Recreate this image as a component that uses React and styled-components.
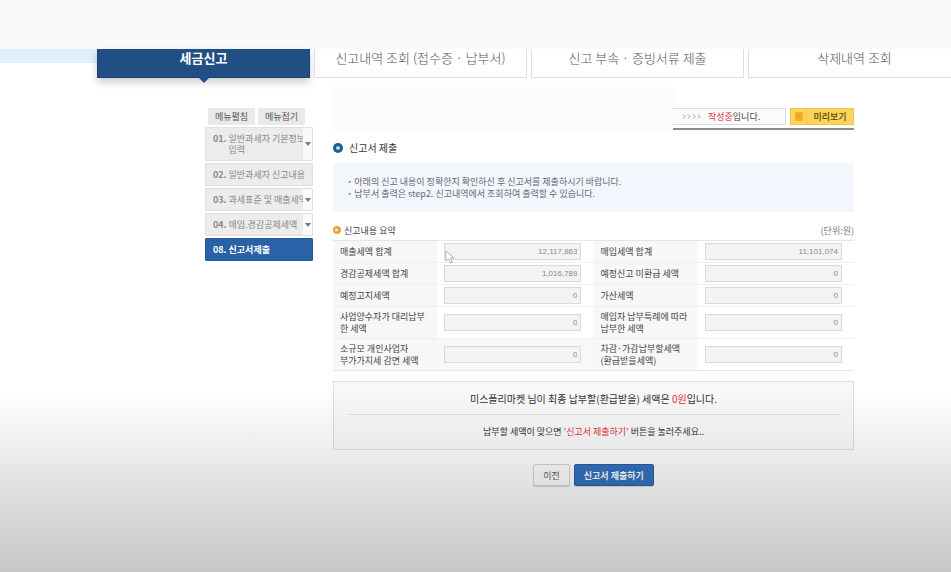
import React from "react";
import styled, { createGlobalStyle } from "styled-components";

const tabs = [
  { name: "세금신고", active: true },
  { name: "신고내역 조회 (접수증 · 납부서)" },
  { name: "신고 부속 · 증빙서류 제출" },
  { name: "삭제내역 조회" },
];

const steps = [
  { no: "01.", lines: ["일반과세자 기본정보", "입력"], more: true },
  { no: "02.", lines: ["일반과세자 신고내용"] },
  { no: "03.", lines: ["과세표준 및 매출세액"], more: true },
  { no: "04.", lines: ["매입.경감공제세액"], more: true },
  { no: "08.", lines: ["신고서제출"], active: true },
];

const rows = [
  [
    { id: "sales", label: ["매출세액 합계"], value: "12,117,863" },
    { id: "purchase", label: ["매입세액 합계"], value: "11,101,074" },
  ],
  [
    { id: "deduct", label: ["경감공제세액 합계"], value: "1,016,789" },
    { id: "unpaid", label: ["예정신고 미환급 세액"], value: "0" },
  ],
  [
    { id: "notice", label: ["예정고지세액"], value: "0" },
    { id: "penalty", label: ["가산세액"], value: "0" },
  ],
  [
    { id: "transfer", label: ["사업양수자가 대리납부", "한 세액"], value: "0" },
    { id: "buyer", label: ["매입자 납부특례에 따라", "납부한 세액"], value: "0" },
  ],
  [
    { id: "small", label: ["소규모 개인사업자", "부가가치세 감면 세액"], value: "0", muted: true },
    { id: "total", label: ["차감·가감납부할세액", "(환급받을세액)"], value: "0" },
  ],
];

function Field({ item }) {
  return (
    <>
      <HeadCell scope="row">
        <label htmlFor={item.id}>
          {item.label.map((line) => (
            <Line key={line}>{line}</Line>
          ))}
        </label>
      </HeadCell>
      <ValueCell $muted={item.muted}>
        <Amount id={item.id} defaultValue={item.value} readOnly />
        {item.id === "sales" && (
          <Pointer viewBox="0 0 12 16" aria-hidden="true">
            <path
              d="M1 1v11l3-2.500 2 4.500 2-1-2-4.500h4z"
              fill="#fff"
              stroke="#aaa"
              strokeLinejoin="round"
            />
          </Pointer>
        )}
      </ValueCell>
    </>
  );
}

function App() {
  return (
    <Page>
      <GlobalStyle />
      <TopBand />
      <TabBar>
        <TabEdge />
        <Tabs>
          {tabs.map((tab) => (
            <Tab key={tab.name} href="#" $active={tab.active}>
              {tab.name}
            </Tab>
          ))}
        </Tabs>
      </TabBar>

      <Body>
        <Sidebar>
          <MenuButtons>
            <MenuButton>메뉴펼침</MenuButton>
            <MenuButton>메뉴접기</MenuButton>
          </MenuButtons>
          {steps.map((step) => (
            <Step key={step.no} $active={step.active} $more={step.more}>
              <StepNo>{step.no}</StepNo>
              <StepName>
                {step.lines.map((line) => (
                  <span key={line}>{line}</span>
                ))}
              </StepName>
              {step.more && (
                <StepMore>
                  <svg width="6" height="4" viewBox="0 0 6 4">
                    <path d="M0 0h6L3 4z" fill="#777" />
                  </svg>
                </StepMore>
              )}
            </Step>
          ))}
        </Sidebar>

        <Content>
          <TitleRow>
            <TitleBlank />
            <StatusArea>
              <Status>
                <svg width="20" height="5" viewBox="0 0 20 5">
                  <path
                    d="M1 0.500l2 2-2 2M6 0.500l2 2-2 2M11 0.500l2 2-2 2M16 0.500l2 2-2 2"
                    fill="none"
                    stroke="#999"
                  />
                </svg>
                <span>
                  <Red>작성중</Red>입니다.
                </span>
              </Status>
              <Preview>
                <PreviewIcon>
                  <svg width="8" height="9" viewBox="0 0 8 9">
                    <path d="M0 0h8v9H0z" fill="#efb32f" />
                    <path d="M1 2.500h6M1 4.500h6M1 6.500h6" stroke="#dfa227" />
                  </svg>
                </PreviewIcon>
                <PreviewText>미리보기</PreviewText>
              </Preview>
            </StatusArea>
          </TitleRow>

          <Title>
            <svg width="10" height="10" viewBox="0 0 10 10">
              <circle cx="5" cy="5" r="5" fill="#14619a" />
              <circle cx="5" cy="5" r="2" fill="#8fc4e6" />
              <path d="M3.500 5h3" stroke="#fff" />
            </svg>
            신고서 제출
          </Title>

          <Notice>
            <li>아래의 신고 내용이 정확한지 확인하신 후 신고서를 제출하시기 바랍니다.</li>
            <li>납부서 출력은 step2. 신고내역에서 조회하여 출력할 수 있습니다.</li>
          </Notice>

          <SectionHead>
            <SectionTitle>
              <svg width="8" height="10" viewBox="0 0 8 10">
                <circle cx="4" cy="4" r="4" fill="#e9a23b" />
                <path d="M2.500 2l3 2-3 2z" fill="#fff3d6" />
              </svg>
              신고내용 요약
            </SectionTitle>
            <Unit>(단위:원)</Unit>
          </SectionHead>

          <Table>
            <tbody>
              {rows.map(([left, right]) => (
                <Row key={left.id} $tall={left.label.length > 1}>
                  <Field item={left} />
                  <Field item={right} />
                </Row>
              ))}
            </tbody>
          </Table>

          <Summary>
            <Result>
              미스플리마켓 님이 최종 납부할(환급받을) 세액은 <Red>0원</Red>입니다.
            </Result>
            <Guide>
              납부할 세액이 맞으면 <Red>'신고서 제출하기'</Red> 버튼을 눌러주세요..
            </Guide>
          </Summary>

          <Actions>
            <Button>이전</Button>
            <SubmitButton>신고서 제출하기</SubmitButton>
          </Actions>
        </Content>
      </Body>
      <Shade />
    </Page>
  );
}

export default App;

const GlobalStyle = createGlobalStyle`
  * {
    box-sizing: border-box;
  }

  body {
    margin: 0;
    background: #fff;
    color: #555;
    font-family: "Noto Sans CJK KR", sans-serif;
    font-size: 9px;
    line-height: 11px;
  }

  button,
  input {
    font: inherit;
    color: inherit;
    margin: 0;
  }

  svg {
    display: block;
    flex: none;
  }
`;

const Page = styled.div`
  position: relative;
  min-height: 100vh;
  overflow: hidden;
`;

const TopBand = styled.header`
  height: 49px;
  background: #fcf9fa;
`;

const TabBar = styled.div`
  display: flex;
`;

const TabEdge = styled.div`
  flex: none;
  width: 97px;
  height: 14px;
  background: #e1effc;
`;

const Tabs = styled.nav`
  flex: 1;
  display: grid;
  grid-template-columns: repeat(4, minmax(213px, 1fr));
  gap: 4px;
`;

const Tab = styled.a`
  position: relative;
  height: 29px;
  padding-bottom: 10px;
  display: flex;
  align-items: center;
  justify-content: center;
  font-size: 13px;
  line-height: 18px;
  font-weight: ${(props) => (props.$active ? 700 : 300)};
  color: ${(props) => (props.$active ? "#fff" : "#555")};
  background: ${(props) => (props.$active ? "#214e83" : "#fff")};
  border: 1px solid ${(props) => (props.$active ? "#1b4474" : "#dcdfe2")};
  border-top: none;
  box-shadow: ${(props) =>
    props.$active ? "0 4px 8px rgba(0, 0, 0, 0.2)" : "none"};
  text-decoration: none;
  white-space: nowrap;

  &::after {
    content: "";
    display: ${(props) => (props.$active ? "block" : "none")};
    position: absolute;
    top: 100%;
    left: 50%;
    margin-left: -6px;
    border: 6px solid transparent;
    border-top-color: #214e83;
    border-bottom: none;
  }
`;

const Body = styled.div`
  display: flex;
  align-items: flex-start;
  gap: 20px;
  padding: 9px 97px 24px 205px;
`;

const Sidebar = styled.aside`
  flex: none;
  width: 108px;
  padding-top: 21px;
  display: flex;
  flex-direction: column;
  gap: 2px;
`;

const MenuButtons = styled.div`
  display: flex;
  gap: 3px;
  padding: 0 8px 0 3px;
`;

const MenuButton = styled.button`
  flex: 1;
  height: 17px;
  padding: 0;
  border: none;
  border-radius: 1px;
  background: #e9e9e9;
  color: #555;
  white-space: nowrap;
`;

const Step = styled.button`
  position: relative;
  display: flex;
  align-items: flex-start;
  gap: 2px;
  width: 100%;
  padding: 5px ${(props) => (props.$more ? 9 : 3)}px 5px 7px;
  border: 1px solid ${(props) => (props.$active ? "#25599a" : "#e0e0e0")};
  border-radius: 1px;
  background: ${(props) => (props.$active ? "#2a62a8" : "#ececec")};
  color: ${(props) => (props.$active ? "#fff" : "#888")};
  font-weight: ${(props) => (props.$active ? 700 : 400)};
  text-align: left;
`;

const StepNo = styled.span`
  flex: none;
  font-weight: 700;
`;

const StepName = styled.span`
  display: flex;
  flex-direction: column;
  min-width: 0;
  overflow: hidden;
  white-space: nowrap;
`;

const StepMore = styled.span`
  position: absolute;
  top: 0;
  right: 0;
  bottom: 0;
  width: 9px;
  display: flex;
  align-items: center;
  justify-content: center;
  background: #fafafa;
`;

const Content = styled.main`
  flex: 1;
  min-width: 0;
`;

const TitleRow = styled.div`
  display: flex;
  align-items: flex-end;
`;

const TitleBlank = styled.div`
  flex: 1;
  height: 43px;
  background: #fcfafa;
`;

const StatusArea = styled.div`
  display: flex;
  gap: 4px;
  width: 181px;
  padding-bottom: 3px;
  border-bottom: 2px solid #8c8c8c;
`;

const Status = styled.div`
  flex: 1;
  height: 17px;
  display: flex;
  align-items: center;
  gap: 6px;
  padding-left: 9px;
  border: 1px solid #dcdcdf;
  border-left: none;
  background: #fbfbfc;
  color: #444;
`;

const Red = styled.span`
  color: #e0323c;
`;

const Preview = styled.button`
  display: flex;
  width: 64px;
  height: 17px;
  padding: 0;
  border: 1px solid #f0c54c;
  background: #fcd45c;
  color: #5a4000;
  font-weight: 500;
`;

const PreviewIcon = styled.span`
  width: 16px;
  height: 100%;
  display: flex;
  align-items: center;
  justify-content: center;
  border-right: 1px solid #f2c450;
`;

const PreviewText = styled.span`
  flex: 1;
  align-self: center;
  text-align: center;
`;

const Title = styled.h1`
  display: flex;
  align-items: center;
  gap: 6px;
  margin: 10px 0 7px;
  font-size: 10px;
  line-height: 16px;
  font-weight: 400;
  color: #333;
`;

const Notice = styled.ul`
  margin: 0;
  padding: 13px 14px 12px;
  list-style: none;
  background: #f3f6fc;
  color: #667;
  line-height: 12px;

  li {
    display: flex;
    gap: 2px;
  }

  li::before {
    content: "·";
    font-weight: 700;
  }
`;

const SectionHead = styled.div`
  display: flex;
  align-items: center;
  justify-content: space-between;
  margin-top: 12px;
  padding-bottom: 3px;
  line-height: 13px;
`;

const SectionTitle = styled.h2`
  display: flex;
  align-items: center;
  gap: 3px;
  margin: 0;
  font-size: 9px;
  font-weight: 400;
  color: #444;
`;

const Unit = styled.span`
  color: #777;
`;

const Table = styled.table`
  width: 100%;
  table-layout: fixed;
  border-collapse: collapse;
  border-top: 1px solid #e6e6e6;
  border-bottom: 1px solid #e6e6e6;
`;

const Row = styled.tr`
  height: ${(props) => (props.$tall ? 32 : 22)}px;

  & + & {
    border-top: 1px solid #f0f0f0;
  }
`;

const HeadCell = styled.th`
  width: 20%;
  padding: 0 0 0 7px;
  background: #f7f7f7;
  color: #444;
  font-weight: 400;
  text-align: left;
`;

const Line = styled.span`
  display: block;
  line-height: 12px;
  white-space: nowrap;
`;

const ValueCell = styled.td`
  position: relative;
  width: 30%;
  padding: 0 12px 0 7px;
  background: ${(props) => (props.$muted ? "#f8f8f8" : "#fff")};
`;

const Amount = styled.input`
  display: block;
  width: 100%;
  height: 17px;
  padding: 0 3px;
  border: 1px solid #d9d9d9;
  border-radius: 0;
  background: #f3f3f3;
  color: #8a8a8a;
  font-family: "Liberation Sans", sans-serif;
  font-size: 8px;
  text-align: right;
`;

const Pointer = styled.svg`
  position: absolute;
  top: 9px;
  left: 8px;
  width: 11px;
  height: 15px;
  z-index: 1;
`;

const Summary = styled.section`
  margin-top: 10px;
  padding: 3px 13px;
  border: 1px solid #dedede;
  background: linear-gradient(#f8f8f8, #fbfbfb);
  text-align: center;
  color: #333;
`;

const Result = styled.p`
  margin: 0;
  padding: 6px 0 7px;
  border-bottom: 1px solid #e4e4e4;
  font-size: 10px;
  line-height: 16px;
`;

const Guide = styled.p`
  margin: 0;
  padding: 10px 0 8px;
  line-height: 13px;
`;

const Actions = styled.div`
  display: flex;
  justify-content: center;
  gap: 4px;
  margin-top: 14px;
`;

const Button = styled.button`
  height: 22px;
  padding: 0 9px;
  border: 1px solid #d6d6d6;
  border-radius: 2px;
  background: #fdfdfd;
  box-shadow: 0 1px 1px rgba(0, 0, 0, 0.15);
  color: #555;
`;

const SubmitButton = styled(Button)`
  border-color: #285ea3;
  background: #3372be;
  color: #fff;
  font-weight: 700;
`;

const Shade = styled.div`
  position: absolute;
  left: 0;
  right: 0;
  bottom: 0;
  height: 32%;
  pointer-events: none;
  background: linear-gradient(rgba(0, 0, 0, 0), rgba(0, 0, 0, 0.22));
`;
